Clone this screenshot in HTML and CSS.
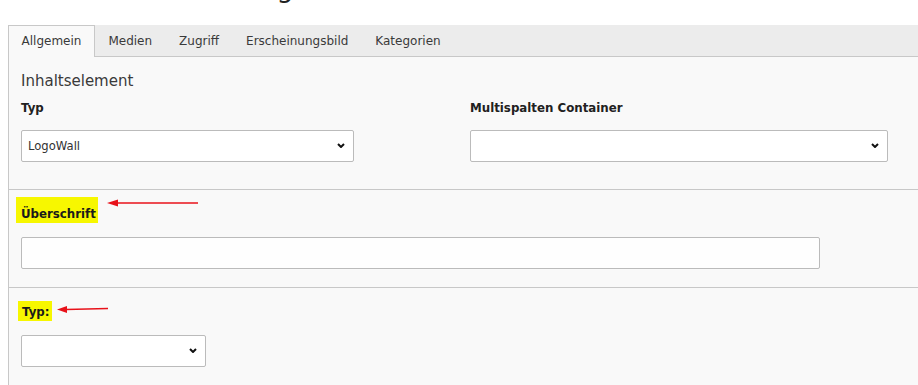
FILE: index.html
```html
<!DOCTYPE html>
<html lang="de">
<head>
  <meta charset="UTF-8">
  <title>Inhaltselement anlegen</title>
  <link rel="stylesheet" href="styles.css">
</head>
<body>
  <div class="page">
    <h1>Inhaltselement anlegen</h1>

    <div class="tabs">
      <div class="tab active">Allgemein</div>
      <div class="tab">Medien</div>
      <div class="tab">Zugriff</div>
      <div class="tab">Erscheinungsbild</div>
      <div class="tab">Kategorien</div>
    </div>

    <div class="panel">
      <div class="section first">
        <div class="section-title">Inhaltselement</div>
        <div class="row">
          <div class="field">
            <label class="label">Typ</label>
            <div class="select-wrap type-select">
              <select><option>LogoWall</option></select>
              <svg class="chevron" width="8" height="5" viewBox="0 0 8 5"><path d="M1 1 L4 4 L7 1" /></svg>
            </div>
          </div>
          <div class="field">
            <label class="label">Multispalten Container</label>
            <div class="select-wrap container-select">
              <select><option></option></select>
              <svg class="chevron" width="8" height="5" viewBox="0 0 8 5"><path d="M1 1 L4 4 L7 1" /></svg>
            </div>
          </div>
        </div>
      </div>

      <div class="section second">
        <div class="label-line">
          <span class="mark mark-heading">Überschrift</span>
          <svg class="arrow arrow-heading" width="92" height="10" viewBox="0 0 92 10">
            <path d="M10 5 L91 5" />
            <polygon points="0,5 11,1.5 11,8.5" />
          </svg>
        </div>
        <input type="text" class="text-input">
      </div>

      <div class="section third">
        <div class="label-line">
          <span class="mark mark-type">Typ:</span>
          <svg class="arrow arrow-type" width="52" height="10" viewBox="0 0 52 10">
            <path d="M9 5.5 L51 4.5" />
            <polygon points="0,5.5 10,2 10,9" />
          </svg>
        </div>
        <div class="select-wrap small-select">
          <select><option></option></select>
          <svg class="chevron" width="8" height="5" viewBox="0 0 8 5"><path d="M1 1 L4 4 L7 1" /></svg>
        </div>
      </div>
    </div>
  </div>
</body>
</html>
```

FILE: styles.css
```css
body {
  margin: 0;
  background-color: #ffffff;
  color: #333333;
  font-family: "DejaVu Sans", Verdana, sans-serif;
  font-size: 12px;
  overflow: hidden;
}

.page {
  padding-left: 8px;
}

h1 {
  margin: -28px 0 21px 0;
  font-size: 27px;
  font-weight: normal;
  line-height: 32px;
  color: #222222;
}

.tabs {
  display: flex;
  height: 31px;
  background-color: #ececec;
  border-bottom: 1px solid #c8c8c8;
}

.tab {
  padding: 0 12.5px;
  font-size: 12px;
  line-height: 31px;
  border: 1px solid transparent;
  border-bottom: none;
  color: #3a3a3a;
}

.tab.active {
  background-color: #f9f9f9;
  border-color: #c8c8c8;
  height: 31px;
  margin-bottom: -1px;
}

.panel {
  background-color: #f9f9f9;
  border-left: 1px solid #c8c8c8;
}

.section {
  padding: 0 12px;
  border-bottom: 1px solid #c8c8c8;
}

.section.first {
  padding-top: 14px;
  padding-bottom: 27px;
}

.section.second {
  padding-top: 7px;
  padding-bottom: 18px;
}

.section.third {
  padding-top: 13px;
  padding-bottom: 30px;
  border-bottom: none;
}

.section-title {
  font-size: 15px;
  line-height: 20px;
  color: #3a3a3a;
  margin-bottom: 9px;
}

.row {
  display: grid;
  grid-template-columns: 449px 1fr;
}

.label {
  display: block;
  font-weight: bold;
  font-size: 11.8px;
  line-height: 16px;
  color: #212121;
  margin-bottom: 14px;
}

.select-wrap {
  position: relative;
}

.select-wrap select {
  display: block;
  width: 100%;
  height: 32px;
  padding: 0 24px 0 6px;
  font-family: "DejaVu Sans", Verdana, sans-serif;
  font-size: 11.6px;
  color: #333333;
  background-color: #ffffff;
  border: 1px solid #bbbbbb;
  border-radius: 2px;
  appearance: none;
  -webkit-appearance: none;
}

.chevron {
  position: absolute;
  right: 9px;
  top: 13px;
  pointer-events: none;
}

.chevron path {
  fill: none;
  stroke: #111111;
  stroke-width: 2;
}

.type-select {
  width: 333px;
}

.container-select {
  width: 418px;
}

.small-select {
  width: 185px;
}

.label-line {
  position: relative;
  margin-bottom: 14px;
}

.mark {
  display: inline-block;
  font-weight: bold;
  font-size: 11.8px;
  line-height: 16px;
  color: #1a1a1a;
  background-color: #f7f700;
}

.mark-heading {
  margin-left: -5px;
  padding: 9px 2px 1px 5px;
}

.mark-type {
  margin-left: -3px;
  padding: 3px 2px 1px 4px;
}

.arrow {
  position: absolute;
}

.arrow path {
  fill: none;
  stroke: #e8121a;
  stroke-width: 1.5;
}

.arrow polygon {
  fill: #e8121a;
}

.arrow-heading {
  left: 86px;
  top: 1px;
}

.arrow-type {
  left: 36px;
  top: 3px;
}

.text-input {
  display: block;
  width: 799px;
  height: 32px;
  box-sizing: border-box;
  background-color: #fefefe;
  border: 1px solid #bbbbbb;
  border-radius: 2px;
  margin: 0;
}
```
